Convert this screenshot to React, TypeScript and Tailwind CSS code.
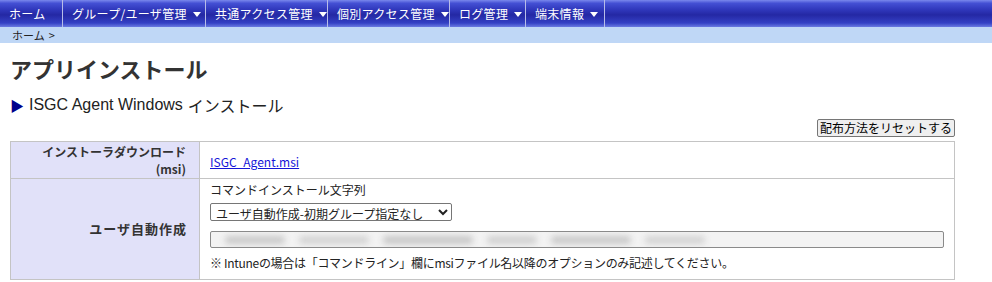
import React from 'react';

const NAV = [
  { label: 'ホーム', w: 'w-[63px]', caret: false },
  { label: 'グループ/ユーザ管理', w: 'w-[143px]', caret: true },
  { label: '共通アクセス管理', w: 'w-[122px]', caret: true },
  { label: '個別アクセス管理', w: 'w-[122px]', caret: true },
  { label: 'ログ管理', w: 'w-[76px]', caret: true },
  { label: '端末情報', w: 'w-[79px]', caret: true },
];

function Caret() {
  return (
    <svg width="8" height="5" viewBox="0 0 8 5" className="ml-[6px] mt-[1px]">
      <path d="M0 0h8L4 5z" fill="#fff" />
    </svg>
  );
}

export default function App() {
  return (
    <div
      className="w-[992px] h-[282px] bg-white text-[12px] text-[#222] overflow-hidden"
      style={{ fontFamily: '"Noto Sans CJK JP", "Noto Sans", sans-serif' }}
    >
      <nav className="flex h-[27px] bg-[linear-gradient(to_bottom,#7a88ec_0%,#4450d4_12%,#3038bc_35%,#2428a4_55%,#3440c4_85%,#6a7ae2_100%)]">
        {NAV.map((item) => (
          <div
            key={item.label}
            className={`${item.w} flex items-center pl-[9px] text-white text-[12px] tracking-[0.3px] border-r border-[#b8bde8] shrink-0`}
          >
            {item.label}
            {item.caret && <Caret />}
          </div>
        ))}
      </nav>
      <div className="h-[16px] bg-[#bfd7f6] pl-[12px] text-[11px] leading-[16px] text-[#222] flex">
        <span>ホーム</span>
        <span className="ml-[4px]">&gt;</span>
      </div>

      <div className="px-[10px]">
        <h1 className="mt-[10px] text-[22px] leading-[30px] font-bold text-[#333]">アプリインストール</h1>
        <h2 className="mt-[12px] text-[16px] leading-[20px] text-[#222] flex items-center">
          <span className="text-[#00008b] text-[14px] mr-[5px]">▶</span>
          <span style={{ fontFamily: '"Liberation Sans", "Noto Sans CJK JP", sans-serif' }}>ISGC Agent Windows</span>
          <span className="ml-[5px]">インストール</span>
        </h2>

        <div className="flex justify-end w-[945px] mt-[4px]">
          <button className="h-[18px] w-[138px] px-[2px] text-[12px] leading-[14px] bg-[#efefef] border border-[#767676] rounded-[2px] text-black">
            配布方法をリセットする
          </button>
        </div>

        <table className="mt-[4px] w-[945px] border-collapse">
          <tbody>
            <tr className="h-[37px]">
              <th className="w-[190px] bg-[#e1e1f9] border border-[#c4c4c4] text-right pr-[13px] font-bold text-[12px] leading-[17px] text-[#333]">
                <div>インストーラダウンロード</div>
                <div>(msi)</div>
              </th>
              <td className="border border-[#c4c4c4] pl-[10px] pt-[3px]">
                <a href="#" className="text-[#1515d8] underline text-[12px]">
                  ISGC_Agent.msi
                </a>
              </td>
            </tr>
            <tr className="h-[101px]">
              <th className="bg-[#e1e1f9] border border-[#c4c4c4] text-right pr-[12px] font-bold text-[13px] tracking-[1px] text-[#333]">
                ユーザ自動作成
              </th>
              <td className="border border-[#c4c4c4] pl-[10px] pr-[10px] align-top pt-[2px]">
                <div className="leading-[18px]">コマンドインストール文字列</div>
                <div className="mt-[4px]">
                  <select className="h-[18px] w-[242px] text-[12px] leading-[14px] border border-[#767676] rounded-[2px] bg-white px-[1px]">
                    <option>ユーザ自動作成-初期グループ指定なし</option>
                  </select>
                </div>
                <div className="mt-[8px] h-[17px] w-[734px] border border-[#8a8a8a] rounded-[2px] bg-[#f3f3f3] overflow-hidden flex items-center gap-[14px] pl-[14px]">
                  <div className="h-[8px] w-[60px] bg-[#c8c8c8] rounded-full blur-[3px]" />
                  <div className="h-[8px] w-[70px] bg-[#d2d2d2] rounded-full blur-[3px]" />
                  <div className="h-[8px] w-[90px] bg-[#c6c6c6] rounded-full blur-[3px]" />
                  <div className="h-[8px] w-[50px] bg-[#cfcfcf] rounded-full blur-[3px]" />
                  <div className="h-[8px] w-[80px] bg-[#c8c8c8] rounded-full blur-[3px]" />
                  <div className="h-[8px] w-[60px] bg-[#d2d2d2] rounded-full blur-[3px]" />
                </div>
                <div className="mt-[6px] leading-[18px] tracking-[-0.3px]">
                  ※ Intuneの場合は「コマンドライン」欄にmsiファイル名以降のオプションのみ記述してください。
                </div>
              </td>
            </tr>
          </tbody>
        </table>
      </div>
    </div>
  );
}
